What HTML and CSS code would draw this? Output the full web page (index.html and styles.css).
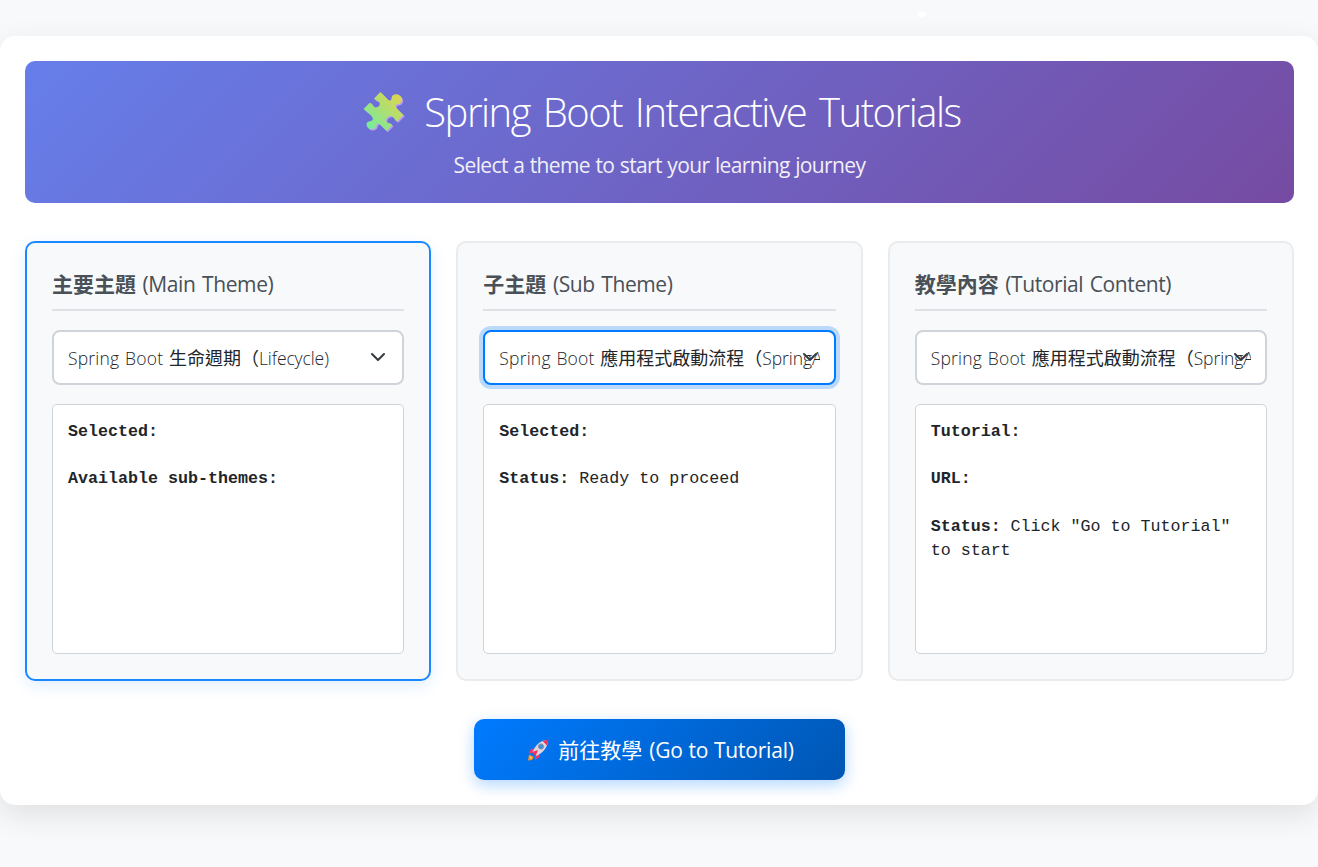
FILE: index.html
```html
<!DOCTYPE html>
<html lang="zh-Hant">
<head>
<meta charset="utf-8">
<title>Spring Boot Interactive Tutorials</title>
<link rel="stylesheet" href="styles.css">
</head>
<body>
<span class="speck"></span>
<main class="container">
  <header class="hero">
    <h1 class="hero-title">
      <svg class="puzzle" viewBox="0 0 42 42" aria-hidden="true">
        <defs><linearGradient id="pz" x1="0" y1="1" x2="1" y2="0"><stop offset="0.1" stop-color="#74ec9c"/><stop offset="0.85" stop-color="#d6d655"/></linearGradient></defs>
        <path fill="#c09af0" transform="translate(1.200 1.200)" d="M17 1L24 8C27 11 28 8 28 6C29 2 37 2 38 8C38 12 35 13 33 13C31 14 32 16 33 17L39.500 23.500L33.500 29.500C32 30 31 28 30 26C27 22 21 26 23 30C24 32 28 31 28.500 33.500L23 39L16 32C14 31 13 33 13 35C11 39 3 38 3.500 32C4 29 8 30 9.500 28C10 27 9 25 7 23L0.500 17.500L6 12C8 11 9 13 10 15C13 18 18 14 16 11C15 9 11 9 11 7Z"/>
        <path fill="url(#pz)" d="M17 1L24 8C27 11 28 8 28 6C29 2 37 2 38 8C38 12 35 13 33 13C31 14 32 16 33 17L39.500 23.500L33.500 29.500C32 30 31 28 30 26C27 22 21 26 23 30C24 32 28 31 28.500 33.500L23 39L16 32C14 31 13 33 13 35C11 39 3 38 3.500 32C4 29 8 30 9.500 28C10 27 9 25 7 23L0.500 17.500L6 12C8 11 9 13 10 15C13 18 18 14 16 11C15 9 11 9 11 7Z"/>
      </svg>
      <span>Spring Boot Interactive Tutorials</span>
    </h1>
    <p class="hero-sub">Select a theme to start your learning journey</p>
  </header>

  <section class="panels">
    <div class="panel active">
      <h2 class="panel-title"><b>主要主題</b> <span>(Main Theme)</span></h2>
      <div class="select"><span class="value"><span class="lead">Spring Boot </span><span class="cjk">生命週期（</span>Lifecycle)</span>
        <svg class="chevron" viewBox="0 0 16 16"><path d="M2 5l6 6 6-6"/></svg></div>
      <div class="info"><b>Selected:</b><br><br><b>Available sub-themes:</b></div>
    </div>
    <div class="panel">
      <h2 class="panel-title"><b>子主題</b> <span>(Sub Theme)</span></h2>
      <div class="select focused"><span class="value"><span class="lead">Spring Boot </span><span class="cjk">應用程式啟動流程（</span>SpringA</span>
        <svg class="chevron" viewBox="0 0 16 16"><path d="M2 5l6 6 6-6"/></svg></div>
      <div class="info"><b>Selected:</b><br><br><b>Status:</b> Ready to proceed</div>
    </div>
    <div class="panel">
      <h2 class="panel-title"><b>教學內容</b> <span>(Tutorial Content)</span></h2>
      <div class="select"><span class="value"><span class="lead">Spring Boot </span><span class="cjk">應用程式啟動流程（</span>SpringA</span>
        <svg class="chevron" viewBox="0 0 16 16"><path d="M2 5l6 6 6-6"/></svg></div>
      <div class="info"><b>Tutorial:</b><br><br><b>URL:</b><br><br><b>Status:</b> Click "Go to Tutorial" to start</div>
    </div>
  </section>

  <div class="actions">
    <button class="go">
      <svg class="rocket" viewBox="0 0 22 22" aria-hidden="true">
        <path fill="#f98a1c" d="M2 15.500L7 18L5 21L1 21.500Z"/>
        <path fill="#fcc050" d="M3 17L5.500 18L4 20L2.500 20Z"/>
        <path fill="#ee3a68" d="M8 9.500L4 10L1.500 14.500L6 14ZM13 14L12.500 18L8 21L8 16.500Z"/>
        <path fill="#ded6e2" d="M21 1C14 1 9 5 5.500 13L9 17C16 14 21 8 21 1Z"/>
        <path fill="#f0315c" d="M21.500 0.500L15.500 2L20 6.500ZM5 13L11 11L8.500 17.500Z"/>
        <circle cx="14" cy="7.500" r="2.600" fill="#3d8fd6" stroke="#8d8ca8" stroke-width="1"/>
      </svg>
      <span class="go-cjk">前往教學</span> <span class="go-latin">(Go to Tutorial)</span>
    </button>
  </div>
</main>
</body>
</html>
```

FILE: styles.css
```css
* { box-sizing: border-box; }
body {
  margin: 0;
  padding-top: 36px;
  height: 867px;
  overflow: hidden;
  background: #f8f9fa;
  color: #212529;
  font-family: "Open Sans", "Noto Sans", "Noto Sans CJK TC", sans-serif;
}
.speck {
  position: absolute;
  left: 917px;
  top: 12px;
  width: 9px;
  height: 5px;
  border-radius: 3px;
  background: #fff;
}
.container {
  height: 769px;
  padding: 25px 24px 25px 25px;
  background: #fff;
  border-radius: 15px;
  box-shadow: 0 10px 30px rgba(0, 0, 0, .1);
}
.hero {
  height: 142px;
  padding-top: 25px;
  border-radius: 10px;
  color: #fff;
  background: linear-gradient(135deg, #667eea 0%, #764ba2 100%);
}
.hero-title {
  display: flex;
  justify-content: center;
  align-items: center;
  gap: 18px;
  height: 52px;
  margin: 0;
  padding-left: 5px;
  font-size: 40px;
  font-weight: 300;
  line-height: 54px;
  letter-spacing: -1.45px;
  word-spacing: 3.6px;
  white-space: nowrap;
}
.puzzle { width: 43px; height: 43px; }
.hero-sub {
  margin: 11px 0 0;
  text-align: center;
  font-size: 21px;
  line-height: 32px;
  letter-spacing: -.62px;
  word-spacing: .6px;
  opacity: .9;
}
.panels {
  display: grid;
  grid-template-columns: repeat(3, minmax(0, 1fr));
  gap: 25px;
  margin-top: 38px;
}
.panel {
  height: 440px;
  padding: 25px;
  border: 2px solid #e9ecef;
  border-radius: 10px;
  background: #f8f9fa;
}
.panel.active {
  border-color: #1a88ff;
  box-shadow: 0 5px 15px rgba(0, 123, 255, .12);
}
.panel-title {
  height: 43px;
  margin: 0 0 19px;
  border-bottom: 2px solid #dee2e6;
  color: #495057;
  font-size: 21px;
  font-weight: 400;
  line-height: 31px;
  letter-spacing: -.4px;
  word-spacing: 1.5px;
  white-space: nowrap;
}
.panel-title b {
  font-family: "Noto Sans CJK TC", sans-serif;
  font-weight: 700;
  letter-spacing: 0;
}
.select {
  position: relative;
  height: 55px;
  margin-bottom: 19px;
  padding: 0 14px;
  border: 2px solid #ced4da;
  border-radius: 8px;
  background: #fff;
  font-size: 17.5px;
  font-weight: 300;
  line-height: 50px;
}
.select.focused {
  border-color: #007bff;
  box-shadow: 0 0 0 4px rgba(0, 123, 255, .25);
}
.value {
  display: block;
  overflow: hidden;
  white-space: nowrap;
  letter-spacing: -.1px;
}
.lead { letter-spacing: .2px; word-spacing: 1px; }
.cjk {
  font-family: "Noto Sans CJK TC", sans-serif;
  font-size: 18px;
  font-weight: 400;
  letter-spacing: 0;
}
.chevron {
  position: absolute;
  right: 16px;
  top: 17px;
  width: 16px;
  height: 16px;
  fill: none;
  stroke: #343a40;
  stroke-width: 2;
  stroke-linecap: round;
  stroke-linejoin: round;
}
.info {
  height: 250px;
  padding: 15px;
  border: 1px solid #ced4da;
  border-radius: 5px;
  background: #fff;
  font-family: "Liberation Mono", monospace;
  font-size: 16.67px;
  line-height: 23.7px;
}
.actions {
  display: flex;
  justify-content: center;
  margin-top: 38px;
}
.go {
  display: flex;
  align-items: center;
  justify-content: center;
  width: 371px;
  height: 61px;
  padding: 0 0 0 2px;
  border: 0;
  border-radius: 10px;
  color: #fff;
  background: linear-gradient(135deg, #007bff, #0056b3);
  box-shadow: 0 5px 15px rgba(0, 123, 255, .3);
  font-family: "Open Sans", "Noto Sans CJK TC", sans-serif;
  font-size: 21px;
  white-space: nowrap;
}
.rocket { width: 22px; height: 22px; margin-right: 9px; }
.go-cjk {
  margin: 0 7px 2px 0;
  font-family: "Noto Sans CJK TC", sans-serif;
  font-weight: 400;
}
.go-latin { letter-spacing: -.2px; word-spacing: .5px; }
```
